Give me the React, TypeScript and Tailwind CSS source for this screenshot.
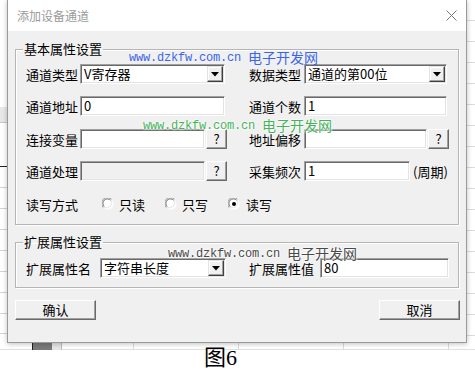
const ui = "font-['Noto_Sans_CJK_SC','Noto_Sans',sans-serif]";

function Sunken({ children, className, disabled }: { children?: React.ReactNode; className: string; disabled?: boolean }) {
  return (
    <div
      className={`${className} h-[20px] flex items-center pl-[3px] text-[13px] text-black border border-t-[#a0a0a0] border-l-[#a0a0a0] border-b-white border-r-white shadow-[inset_1px_1px_0_#696969,inset_-1px_-1px_0_#e3e3e3] ${disabled ? "bg-[#f0f0f0]" : "bg-white"}`}
    >
      {children}
    </div>
  );
}

function DropBtn() {
  return (
    <div className="ml-auto mr-[1px] w-[16px] h-[16px] bg-[#f0f0f0] border border-t-[#e3e3e3] border-l-[#e3e3e3] border-b-[#404040] border-r-[#404040] shadow-[inset_-1px_-1px_0_#a0a0a0,inset_1px_1px_0_white] flex items-center justify-center">
      <svg width="8" height="5" viewBox="0 0 8 5">
        <polygon points="0,0 8,0 4,4.5" fill="#000" />
      </svg>
    </div>
  );
}

function Combo({ value, className }: { value: string; className: string }) {
  return (
    <Sunken className={className}>
      <span>{value}</span>
      <DropBtn />
    </Sunken>
  );
}

function RaisedBtn({ children, className }: { children: React.ReactNode; className: string }) {
  return (
    <div
      className={`${className} h-[20px] flex items-center justify-center text-[13px] text-black bg-[#f0f0f0] border border-t-white border-l-white border-b-[#696969] border-r-[#696969] shadow-[inset_-1px_-1px_0_#a0a0a0]`}
    >
      {children}
    </div>
  );
}

function Radio({ checked }: { checked?: boolean }) {
  return (
    <svg width="12" height="12" viewBox="0 0 12 12" className="shrink-0">
      <circle cx="6" cy="6" r="5.5" fill="#fff" />
      <path d="M1.2 9.5 A5.5 5.5 0 0 1 9.5 1.2" stroke="#a0a0a0" strokeWidth="1" fill="none" />
      <path d="M2.2 8.7 A4.5 4.5 0 0 1 8.7 2.2" stroke="#696969" strokeWidth="1" fill="none" />
      <path d="M9.5 2.5 A5.5 5.5 0 0 1 2.5 9.5" stroke="#e3e3e3" strokeWidth="1" fill="none" />
      {checked && <circle cx="6" cy="6" r="2" fill="#000" />}
    </svg>
  );
}

function Label({ children, className }: { children: React.ReactNode; className: string }) {
  return <span className={`${className} text-[13px] text-black shrink-0 leading-none`}>{children}</span>;
}

function Watermark({ color, className }: { color: string; className: string }) {
  return (
    <div className={`absolute flex items-end whitespace-nowrap ${className} ${color}`}>
      <span className="font-['Liberation_Mono',monospace] text-[12px] leading-none tracking-[-0.2px]">www.dzkfw.com.cn</span>
      <span className={`${ui} text-[14px] leading-none ml-[7px]`}>电子开发网</span>
    </div>
  );
}

export default function App() {
  return (
    <div className={`relative w-[475px] h-[378px] bg-white overflow-hidden ${ui}`}>
      {/* spreadsheet behind the dialog */}
      <div className="absolute left-0 top-[107px] w-[8px] h-[16px] bg-[#e8e8e8] border-b border-[#c8c8c8]" />
      <div className="absolute left-0 top-[166px] w-[8px] h-[1px] bg-[#222]" />
      <div className="absolute left-0 top-[187px] w-[8px] h-[1px] bg-[#d4d4d4]" />
      <div className="absolute left-0 top-[208px] w-[8px] h-[1px] bg-[#d4d4d4]" />
      <div className="absolute left-0 top-[229px] w-[8px] h-[1px] bg-[#d4d4d4]" />
      <div className="absolute left-0 top-[250px] w-[8px] h-[1px] bg-[#d4d4d4]" />
      <div className="absolute left-0 top-[271px] w-[8px] h-[1px] bg-[#d4d4d4]" />
      <div className="absolute left-0 top-[292px] w-[8px] h-[1px] bg-[#d4d4d4]" />
      <div className="absolute left-0 top-[313px] w-[8px] h-[1px] bg-[#d4d4d4]" />
      <div className="absolute left-0 top-[333px] w-[8px] h-[1px] bg-[#d4d4d4]" />
      <div className="absolute right-0 top-0 w-[8px] h-[350px] bg-[repeating-linear-gradient(to_bottom,transparent_0px,transparent_20px,#dcdcdc_20px,#dcdcdc_21px)]" />
      <div className="absolute left-0 top-[340px] w-[475px] h-[10px] border-b border-[#e0e0e0]" />
      <div className="absolute left-[32px] top-[340px] w-[20px] h-[10px] bg-[#7a7a7a] border-l border-[#222]" />
      <div className="absolute left-[52px] top-[340px] w-[10px] h-[10px] bg-[#e6e6e6] border-r border-[#bbb]" />
      <div className="absolute left-[133px] top-[340px] w-[1px] h-[10px] bg-[#dcdcdc]" />
      <div className="absolute left-[238px] top-[340px] w-[1px] h-[10px] bg-[#dcdcdc]" />
      <div className="absolute left-[343px] top-[340px] w-[1px] h-[10px] bg-[#dcdcdc]" />
      <div className="absolute left-[448px] top-[0px] w-[1px] h-[350px] bg-[#dcdcdc]" />

      {/* dialog */}
      <div className="absolute left-[7px] top-0 w-[460px] h-[343px] flex flex-col bg-[#f0f0f0] border border-t-0 border-[#9a9a9a] shadow-[0_1px_5px_rgba(0,0,0,0.25)]">
        <div className="h-[31px] bg-white flex items-center justify-between pl-[9px] pr-[9px] shrink-0">
          <span className="text-[12px] text-[#9a9a9a] leading-none">添加设备通道</span>
          <svg width="11" height="11" viewBox="0 0 11 11">
            <path d="M0.5 0.5 L10.5 10.5 M10.5 0.5 L0.5 10.5" stroke="#777" strokeWidth="1" />
          </svg>
        </div>

        <div className="flex flex-col px-[7px] pt-[9px]">
          <fieldset className="border border-[#b5b5b5] shadow-[1px_1px_0_white,inset_1px_1px_0_white] pl-[10px] pb-[10px]">
            <legend className="-ml-[3px] px-[1px] text-[13px] leading-[18px] text-black">基本属性设置</legend>
            <div className="mt-[6px] flex flex-col">
              <div className="flex items-center h-[20px]">
                <Label className="w-[54px]">通道类型</Label>
                <Combo value="V寄存器" className="w-[145px]" />
                <Label className="w-[55px] ml-[24px]">数据类型</Label>
                <Combo value="通道的第00位" className="w-[143px]" />
              </div>
              <div className="flex items-center h-[20px] mt-[12px]">
                <Label className="w-[54px]">通道地址</Label>
                <Sunken className="w-[145px]">0</Sunken>
                <Label className="w-[55px] ml-[24px]">通道个数</Label>
                <Sunken className="w-[143px]">1</Sunken>
              </div>
              <div className="flex items-center h-[20px] mt-[13px]">
                <Label className="w-[54px]">连接变量</Label>
                <Sunken className="w-[125px]" />
                <RaisedBtn className="w-[21px] ml-[1px]">?</RaisedBtn>
                <Label className="w-[55px] ml-[22px]">地址偏移</Label>
                <Sunken className="w-[123px]" />
                <RaisedBtn className="w-[21px] ml-[1px]">?</RaisedBtn>
              </div>
              <div className="flex items-center h-[20px] mt-[12px]">
                <Label className="w-[54px]">通道处理</Label>
                <Sunken className="w-[125px]" disabled />
                <RaisedBtn className="w-[21px] ml-[1px]">?</RaisedBtn>
                <Label className="w-[55px] ml-[22px]">采集频次</Label>
                <Sunken className="w-[106px]">1</Sunken>
                <Label className="ml-[3px]">(周期)</Label>
              </div>
              <div className="flex items-center h-[20px] mt-[13px]">
                <Label className="w-[54px]">读写方式</Label>
                <div className="ml-[22px] flex items-center gap-[5px]">
                  <Radio />
                  <Label className="">只读</Label>
                </div>
                <div className="ml-[20px] flex items-center gap-[5px]">
                  <Radio />
                  <Label className="">只写</Label>
                </div>
                <div className="ml-[20px] flex items-center gap-[6px]">
                  <Radio checked />
                  <Label className="">读写</Label>
                </div>
              </div>
            </div>
          </fieldset>

          <fieldset className="mt-[8px] border border-[#b5b5b5] shadow-[1px_1px_0_white,inset_1px_1px_0_white] pl-[10px] pb-[9px]">
            <legend className="-ml-[3px] px-[1px] text-[13px] leading-[18px] text-black">扩展属性设置</legend>
            <div className="mt-[7px] flex items-center h-[20px]">
              <Label className="w-[74px]">扩展属性名</Label>
              <Combo value="字符串长度" className="w-[126px]" />
              <Label className="w-[71px] ml-[23px]">扩展属性值</Label>
              <Sunken className="w-[129px]">80</Sunken>
            </div>
          </fieldset>

          <div className="mt-[12px] flex justify-between">
            <RaisedBtn className="w-[81px]">确认</RaisedBtn>
            <RaisedBtn className="w-[81px] mr-[-1px]">取消</RaisedBtn>
          </div>
        </div>
      </div>

      {/* site watermarks pasted over the screenshot */}
      <Watermark color="text-[#3c66e8]" className="left-[129px] top-[50px]" />
      <Watermark
        color="text-[#45b35a] [text-shadow:0_0_2px_white,0_0_2px_white,0_0_3px_white]"
        className="left-[143px] top-[118px]"
      />
      <Watermark
        color="text-[#4a4a4a] [text-shadow:0_0_2px_white,0_0_2px_white,0_0_3px_white]"
        className="left-[168px] top-[246px]"
      />

      <div className="absolute left-[204px] top-[347px] text-[22px] leading-none text-black font-['Liberation_Serif','Noto_Sans_CJK_SC',serif]">
        图6
      </div>
    </div>
  );
}
